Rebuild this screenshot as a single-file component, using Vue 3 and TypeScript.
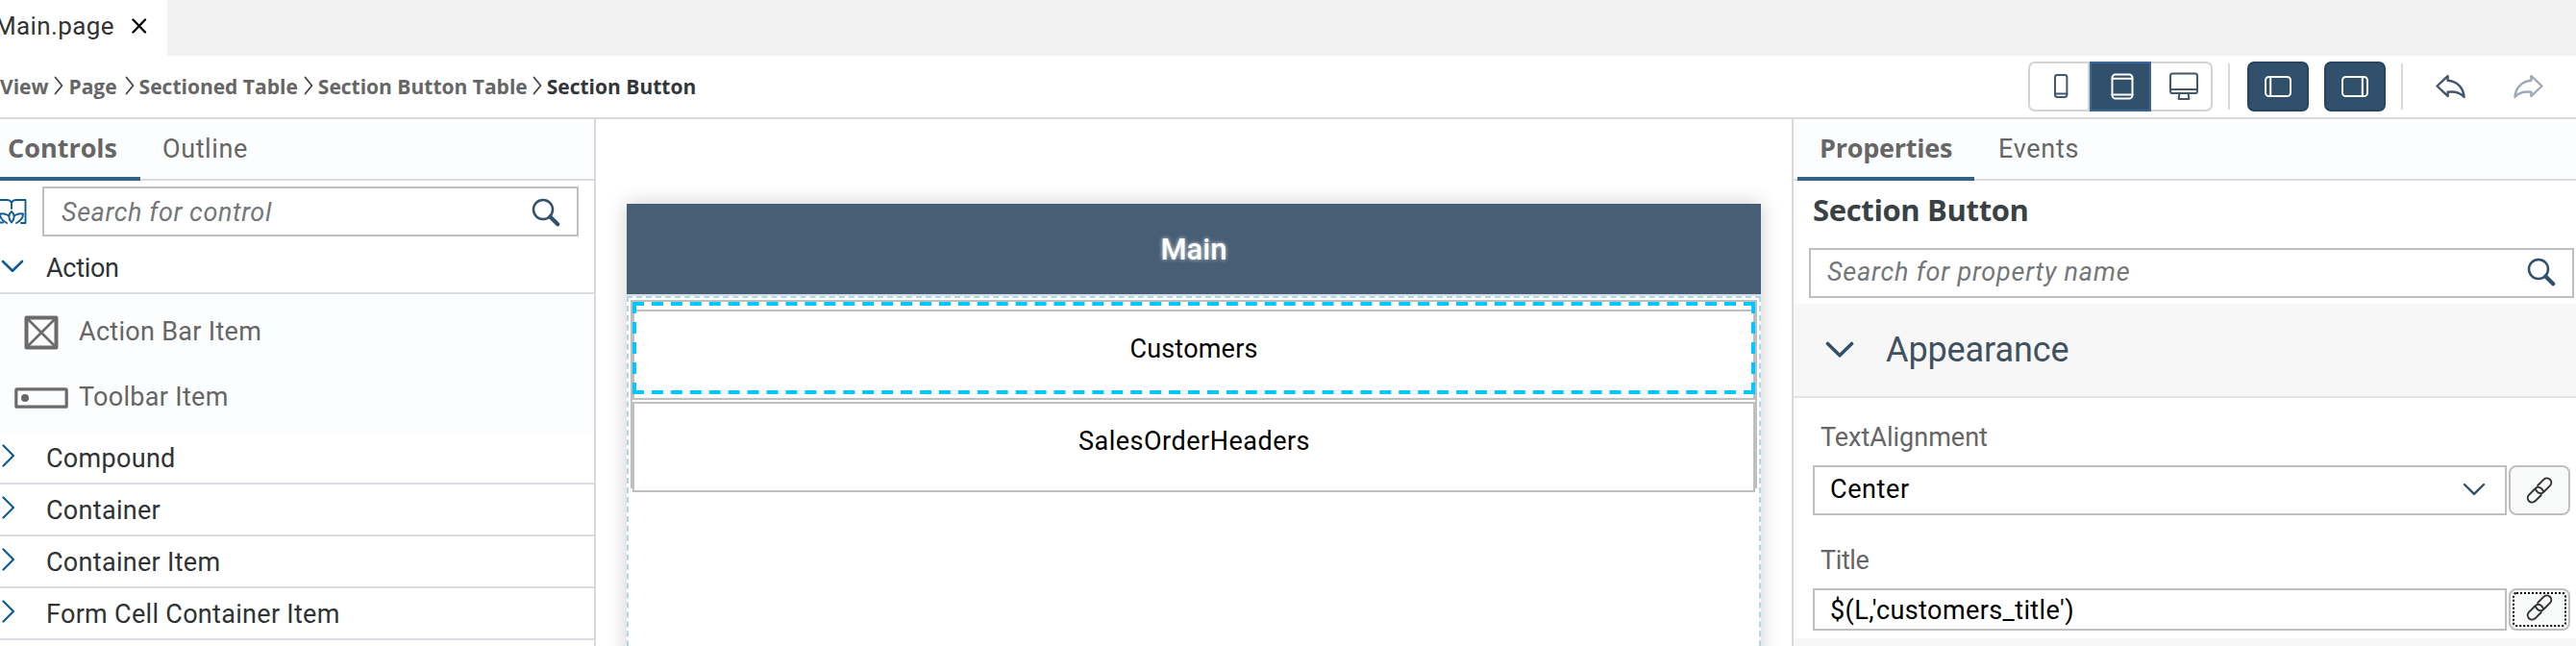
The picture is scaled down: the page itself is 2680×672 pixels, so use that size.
<script setup lang="ts">
import { ref } from 'vue'

type Device = 'phone' | 'tablet' | 'desktop'

const crumbs: string[] = ['View', 'Page', 'Sectioned Table', 'Section Button Table', 'Section Button']
const devices: Device[] = ['phone', 'tablet', 'desktop']
const device = ref<Device>('tablet')
const groups: string[] = ['Compound', 'Container', 'Container Item', 'Form Cell Container Item']
const linkPath =
  'M12.2 9L18.55 2.65A4.6 4.6 0 0 1 25.05 9.15L18.4 15.8A4.6 4.6 0 0 1 11.9 15.8Q10.8 14.8 10.3 13.5M15.8 19L9.45 25.35A4.6 4.6 0 0 1 2.95 18.85L9.6 12.2A4.6 4.6 0 0 1 16.1 12.2Q17.2 13.2 17.7 14.5'
</script>

<template>
  <div class="app">
    <header class="tabs">
      <div class="tab">
        <span class="tab-name">Main.page</span>
        <svg class="close" width="16" height="16" viewBox="0 0 16 16"><path d="M1.5 1.5L14 14.5M14 1.5L1.5 14.5" /></svg>
      </div>
    </header>

    <div class="toolbar">
      <nav class="crumbs">
        <template v-for="(crumb, i) in crumbs" :key="crumb">
          <svg v-if="i > 0" class="crumb-sep" width="10" height="20" viewBox="0 0 10 20"><path d="M1.5 1.5L8.5 10L1.5 18.5" /></svg>
          <span :class="['crumb', { current: i === crumbs.length - 1 }]">{{ crumb }}</span>
        </template>
      </nav>
      <div class="tools">
        <div class="segments">
          <button v-for="d in devices" :key="d" :class="['segment', d, { active: d === device }]" @click="device = d">
            <svg v-if="d === 'phone'" width="16" height="28" viewBox="0 0 16 28"><rect x="2" y="2" width="12.4" height="23" rx="2.4" /><path d="M2 21.5H14.4" /></svg>
            <svg v-else-if="d === 'tablet'" width="24" height="28" viewBox="0 0 24 28"><rect x="1.5" y="1.5" width="21" height="25" rx="3.5" /><path d="M1.5 5.8H22.5M1.5 22.6H22.5" /></svg>
            <svg v-else width="32" height="30" viewBox="0 0 32 30"><rect x="2" y="1.5" width="28" height="20.6" rx="2.4" /><path d="M2 18H30M11.5 22L10.6 28H21.4L20.5 22" /></svg>
          </button>
        </div>
        <i class="divider first"></i>
        <button class="toggle">
          <svg width="28" height="22" viewBox="0 0 28 22"><rect x="1" y="1" width="26" height="20" rx="3.6" /><path d="M6.2 1V21" /></svg>
        </button>
        <button class="toggle">
          <svg width="28" height="22" viewBox="0 0 28 22"><rect x="1" y="1" width="26" height="20" rx="3.6" /><path d="M21.8 1V21" /></svg>
        </button>
        <i class="divider second"></i>
        <svg class="history" width="32" height="26" viewBox="0 0 32 26"><path d="M1.5 12.5L12.6 2V6.8C22 7.5 28.8 14 29.6 24C25 18.8 19 18 12.6 18.8V23Z" /></svg>
        <svg class="history redo" width="32" height="26" viewBox="0 0 32 26"><path d="M30.5 12.5L19.4 2V6.8C10 7.5 3.2 14 2.4 24C7 18.8 13 18 19.4 18.8V23Z" /></svg>
      </div>
    </div>

    <main class="workspace">
      <aside class="left">
        <div class="panel-tabs">
          <span class="panel-tab controls selected">Controls</span>
          <span class="panel-tab outline">Outline</span>
        </div>
        <div class="search-row">
          <svg class="book" width="28" height="28" viewBox="0 0 28 28">
            <path d="M0 2H7Q11 2 12 5Q13 2 17 2H26.5V26H22M12 5V11M12 14C8.5 17 8.5 21 12 25.5C15.5 21 15.5 17 12 14ZM8.5 18C5 16 2 16 0 16.5C0 21 3 24 7 26M15.5 18C19 16 22 16 24 16.5C24 21 21 24 17 26M0 25.5H3" />
          </svg>
          <div class="field search-left">
            <span class="placeholder">Search for control</span>
            <svg width="30" height="30" viewBox="0 0 30 30" class="glass"><circle cx="12" cy="12" r="10" /><path d="M19.4 19.4L27.2 27.2" /></svg>
          </div>
        </div>
        <div class="group action">
          <svg class="chev-down" width="24" height="14" viewBox="0 0 24 14"><path d="M2 2L12 11.8L22 2" /></svg>
          <span class="tight">Action</span>
        </div>
        <div class="items">
          <div class="item">
            <span class="item-icon"><svg width="36" height="36" viewBox="0 0 36 36"><rect x="2.5" y="2.5" width="31" height="31" stroke-width="4" /><path d="M3 3L33 33M33 3L3 33" stroke-width="2.6" /></svg></span>
            <span>Action Bar Item</span>
          </div>
          <div class="item">
            <span class="item-icon"><svg width="56" height="22" viewBox="0 0 56 22"><rect x="1.8" y="1.8" width="52.4" height="18.4" rx="1" stroke-width="3.2" /><circle cx="11" cy="11" r="4" class="dot" /></svg></span>
            <span>Toolbar Item</span>
          </div>
        </div>
        <div v-for="g in groups" :key="g" class="group">
          <svg class="chev-right" width="14" height="24" viewBox="0 0 14 24"><path d="M1.5 1.5L12 12L1.5 22.5" /></svg>
          <span>{{ g }}</span>
        </div>
      </aside>

      <section class="canvas">
        <div class="device">
          <div class="device-header">Main</div>
          <div class="device-body">
            <div class="section">
              <div class="section-button">Customers</div>
              <div class="section-button wide">SalesOrderHeaders</div>
              <svg class="selection" width="1168" height="96" viewBox="0 0 1168 96">
                <path d="M0 2H1168M0 94H1168" stroke-dasharray="12 7.931" />
                <path d="M2 0V96M1166 0V96" stroke-dasharray="12 9" />
              </svg>
            </div>
          </div>
        </div>
      </section>

      <aside class="right">
        <div class="panel-tabs">
          <span class="panel-tab properties selected">Properties</span>
          <span class="panel-tab events">Events</span>
        </div>
        <h2 class="title">Section Button</h2>
        <div class="field search-right">
          <span class="placeholder">Search for property name</span>
          <svg width="30" height="30" viewBox="0 0 30 30" class="glass"><circle cx="12" cy="12" r="10" /><path d="M19.4 19.4L27.2 27.2" /></svg>
        </div>
        <div class="category">
          <svg width="30" height="18" viewBox="0 0 30 18"><path d="M2.5 2.5L15 14.8L27.5 2.5" /></svg>
          <span>Appearance</span>
        </div>
        <div class="props">
          <label class="label">TextAlignment</label>
          <div class="prop-row">
            <div class="field value select">
              <span>Center</span>
              <svg width="24" height="14" viewBox="0 0 24 14"><path d="M2 2L12 11.8L22 2" /></svg>
            </div>
            <button class="link"><svg width="28" height="28" viewBox="0 0 28 28"><path :d="linkPath" /></svg></button>
          </div>
          <label class="label second">Title</label>
          <div class="prop-row short">
            <div class="field value"><span class="expr">$(L,'customers_title')</span></div>
            <button class="link focused"><svg width="28" height="28" viewBox="0 0 28 28"><path :d="linkPath" /></svg></button>
          </div>
        </div>
        <div class="next-category"></div>
      </aside>
    </main>
  </div>
</template>

<style>
body {
  margin: 0;
  overflow: hidden;
}
</style>

<style scoped>
* {
  box-sizing: border-box;
}
.app {
  width: 2680px;
  height: 672px;
  overflow: hidden;
  display: flex;
  flex-direction: column;
  background: #fff;
  color: #303336;
  font: 27px/36px Roboto, 'Liberation Sans', sans-serif;
  white-space: nowrap;
}
svg {
  display: block;
  flex: none;
  fill: none;
  stroke-linecap: round;
  stroke-linejoin: round;
}
button {
  padding: 0;
  font: inherit;
  display: flex;
  align-items: center;
  justify-content: center;
}

.tabs {
  height: 58px;
  flex: none;
  background: #f2f2f2;
}
.tab {
  width: 174px;
  height: 58px;
  padding: 0 21px 4px 0;
  background: #fff;
  display: flex;
  align-items: center;
  justify-content: flex-end;
  gap: 18px;
  color: #333;
  font-size: 26px;
  letter-spacing: 0.4px;
}
.close {
  stroke: #000;
  stroke-width: 2.4;
}

.toolbar {
  height: 66px;
  flex: none;
  border-bottom: 2px solid #d9d9de;
  display: flex;
  align-items: center;
  justify-content: space-between;
}
.crumbs {
  display: flex;
  align-items: center;
  font: bold 21px/28px 'Open Sans', 'Noto Sans', sans-serif;
  color: #666;
}
.crumb:nth-of-type(2) {
  margin-right: 2px;
}
.crumb:nth-of-type(4) {
  margin-right: -1px;
}
.current {
  color: #32363a;
}
.crumb-sep {
  margin: 0 5px 3px 6px;
  stroke: #444;
  stroke-width: 1.8;
}
.tools {
  display: flex;
  align-items: center;
  padding-right: 34px;
}
.segments {
  display: flex;
  width: 192px;
  height: 52px;
  border: 2px solid #d3d3d3;
  border-radius: 7px;
}
.segment {
  flex: none;
  width: 64px;
  height: 52px;
  margin-top: -2px;
  border: 0;
  background: none;
  stroke: #44566a;
  stroke-width: 2;
}
.segment.phone {
  width: 62px;
  padding-left: 4px;
  border-right: 2px solid #d3d3d3;
}
.segment.tablet {
  padding-left: 3px;
}
.segment.desktop {
  padding-left: 4px;
}
.segment.active {
  background: #31506b;
  border: 2px solid #3a6797;
  stroke: #fff;
}
.divider {
  width: 2px;
  height: 48px;
  background: #d9d9de;
}
.divider.first {
  margin: 0 18px 0 16px;
}
.divider.second {
  margin: 0 34px 0 0;
}
.toggle {
  width: 64px;
  height: 52px;
  margin-right: 16px;
  border: 2px solid #29445c;
  border-radius: 7px;
  background: #31506b;
  stroke: #fff;
  stroke-width: 2;
}
.history {
  stroke: #44566a;
  stroke-width: 2.4;
}
.redo {
  margin-left: 48px;
  opacity: 0.5;
}

.workspace {
  flex: 1;
  display: flex;
  min-height: 0;
}
.left {
  width: 620px;
  flex: none;
  border-right: 2px solid #d9d9de;
}
.panel-tabs {
  height: 64px;
  background: #fcfdff;
  border-bottom: 2px solid #d9dce0;
  display: flex;
  color: #666;
}
.panel-tab {
  height: 64px;
  line-height: 63px;
}
.selected {
  font-family: 'Open Sans', 'Noto Sans', sans-serif;
  font-weight: bold;
  line-height: 60px;
  border-bottom: 4px solid #346187;
}
.controls {
  width: 146px;
  padding-left: 8px;
}
.outline {
  padding-left: 23px;
  letter-spacing: 0.6px;
}
.properties {
  width: 184px;
  margin-left: 4px;
  padding-left: 23px;
  letter-spacing: -0.23px;
}
.events {
  padding-left: 25px;
  letter-spacing: 0.7px;
}
.search-row {
  display: flex;
  align-items: center;
  padding-top: 6px;
}
.book {
  stroke: #0f5c94;
  stroke-width: 1.9;
}
.field {
  border: 2px solid #bfbfbf;
  background: #fff;
  display: flex;
  align-items: center;
  justify-content: space-between;
}
.placeholder {
  font-style: italic;
  color: #74777a;
}
.glass {
  stroke: #31506b;
  stroke-width: 2.5;
}
.glass path {
  stroke-width: 4.2;
}
.search-left {
  width: 558px;
  height: 52px;
  margin-left: 16px;
  padding: 1px 17px 0 18px;
  letter-spacing: 0.59px;
}
.group {
  height: 54px;
  display: flex;
  align-items: center;
  padding-top: 1px;
  border-bottom: 2px solid #d9dce0;
  letter-spacing: 0.3px;
}
.group.action {
  height: 60px;
  padding-top: 8px;
}
.chev-down {
  margin: 0 23px 5px 1px;
  stroke: #0f5c94;
  stroke-width: 2.6;
}
.chev-right {
  margin: 0 32px 6px 2px;
  stroke: #0f5c94;
  stroke-width: 2.2;
}
.tight {
  letter-spacing: -0.3px;
}
.items {
  height: 144px;
  padding: 5px 0 3px;
  background: #fcfdff;
}
.item {
  height: 68px;
  display: flex;
  align-items: center;
  color: #666;
  letter-spacing: 0.3px;
}
.item-icon {
  width: 82px;
  padding: 2px 0 0 3px;
  display: flex;
  justify-content: center;
  stroke: #6b6b6b;
}
.dot {
  fill: #666;
  stroke: none;
}

.canvas {
  flex: 1;
  padding: 88px 32px 0;
  overflow: hidden;
}
.device {
  width: 1180px;
  height: 520px;
  background: #fff;
  box-shadow: 0 0 20px rgba(0, 0, 0, 0.2);
}
.device-header {
  height: 96px;
  border-bottom: 2px solid #d5dfe9;
  background: #475e75;
  color: #fff;
  font-size: 31px;
  line-height: 95px;
  font-weight: 500;
  text-align: center;
  text-shadow: 0 0 4px rgba(255, 255, 255, 0.8);
}
.device-body {
  height: 424px;
  padding: 2px;
  border: 2px dashed #add8e6;
}
.section {
  position: relative;
  height: 196px;
  padding-top: 8px;
  border: 2px solid #bfbfbf;
  border-bottom: 0;
}
.section-button {
  height: 94px;
  margin-bottom: 2px;
  border: 2px solid #bfbfbf;
  background: #fff;
  color: #000;
  line-height: 78px;
  text-align: center;
  letter-spacing: 0.2px;
}
.section-button.wide {
  text-indent: 1px;
  letter-spacing: 0.5px;
}
.selection {
  position: absolute;
  left: 0;
  top: 0;
  stroke: #00c8ff;
  stroke-width: 4;
  stroke-linecap: butt;
}

.right {
  width: 816px;
  flex: none;
  border-left: 2px solid #d9d9de;
}
.title {
  margin: 0;
  height: 70px;
  padding: 0 0 0 20px;
  font: bold 31px/60px 'Open Sans', 'Noto Sans', sans-serif;
  letter-spacing: -0.35px;
  color: #3a4145;
}
.search-right {
  width: 796px;
  height: 52px;
  margin-left: 16px;
  padding: 0 17px 2px 17px;
  letter-spacing: 0.8px;
}
.category {
  height: 98px;
  margin-top: 6px;
  padding-left: 33px;
  display: flex;
  align-items: center;
  gap: 33px;
  background: #f7f7f7;
  border-bottom: 2px solid #e4e4e4;
  color: #3f5161;
  font-size: 36px;
  letter-spacing: -0.1px;
}
.category svg {
  stroke: #31506b;
  stroke-width: 3.6;
}
.props {
  height: 250px;
  padding: 23px 0 0 20px;
}
.label {
  display: block;
  height: 47px;
  padding-left: 8px;
  color: #666;
}
.label.second {
  margin-top: 29px;
  letter-spacing: -0.4px;
}
.prop-row {
  display: flex;
  gap: 2px;
  height: 52px;
}
.prop-row.short {
  height: 44px;
}
.value {
  width: 722px;
  padding: 1px 20px 0 16px;
  color: #000;
  letter-spacing: 0.6px;
}
.expr {
  letter-spacing: 0.4px;
}
.select {
  padding: 0 20px 2px 16px;
}
.value svg {
  stroke: #31506b;
  stroke-width: 2.4;
}
.link {
  width: 64px;
  border: 2px solid #bfbfbf;
  border-radius: 8px;
  background: #f8fafa;
  stroke: #333;
  stroke-width: 2;
}
.focused {
  outline: 2px dotted #000;
  outline-offset: -6px;
}
.focused svg {
  margin-top: -4px;
}
.next-category {
  height: 8px;
  background: #f7f7f7;
}
</style>
